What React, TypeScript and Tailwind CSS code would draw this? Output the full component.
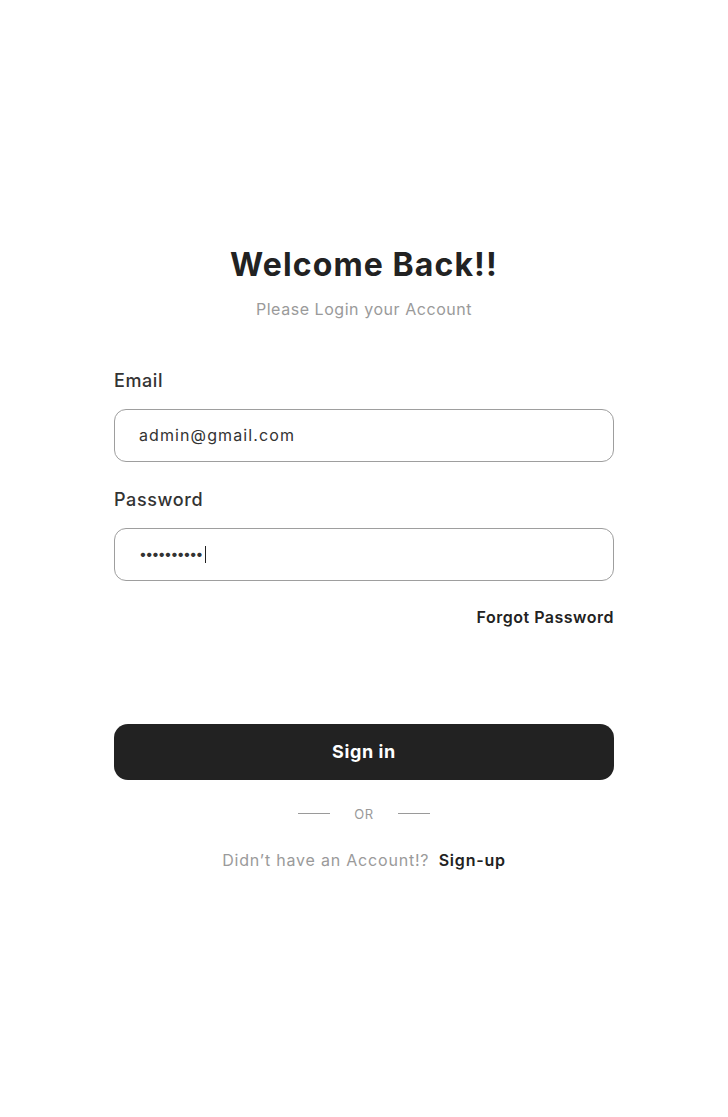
import { useState } from "react";

export default function App() {
  const [email, setEmail] = useState("admin@gmail.com");
  const [password, setPassword] = useState("••••••••••");

  return (
    <div className="min-h-screen bg-white font-['Inter',sans-serif] text-[#222]">
      <div className="mx-auto w-[500px] pt-[241px]">
        <h1 className="text-center text-[32px] font-bold leading-[48px] tracking-[1.1px] text-[#222]">
          Welcome Back!!
        </h1>
        <p className="mt-2 text-center text-base leading-6 tracking-[0.55px] text-[#9a9a9a]">
          Please Login your Account
        </p>

        <form className="mt-[46px]" onSubmit={(e) => e.preventDefault()}>
          <label className="block text-lg font-medium leading-[27px] tracking-[0.6px] text-[#333]">
            Email
          </label>
          <input
            value={email}
            onChange={(e) => setEmail(e.target.value)}
            className="mt-[14.5px] block h-[53px] w-full rounded-xl border border-[#9e9e9e] px-6 text-base tracking-[1.1px] text-[#333] outline-none"
          />

          <label className="mt-[24.5px] block text-lg font-medium leading-[27px] tracking-[0.6px] text-[#333]">
            Password
          </label>
          <div className="mt-[14.5px] flex h-[53px] w-full items-center rounded-xl border border-[#9e9e9e] px-6">
            <span className="text-sm tracking-[-1.6px] text-[#333]">{password}</span>
            <span className="ml-[3px] h-[17px] w-[1.5px] bg-[#222]" />
            <input
              value=""
              onChange={(e) => setPassword(password + e.target.value)}
              className="sr-only"
              type="password"
            />
          </div>

          <div className="mt-6 flex justify-end">
            <a href="#" className="text-base font-semibold leading-6 tracking-[0.5px] text-[#222]">
              Forgot Password
            </a>
          </div>

          <button
            type="submit"
            className="mt-[95px] block h-14 w-full rounded-[14px] bg-[#222] text-lg font-bold tracking-[0.6px] text-white"
          >
            Sign in
          </button>
        </form>

        <div className="mt-6 flex items-center justify-center gap-6">
          <span className="h-px w-8 bg-[#9a9a9a]" />
          <span className="w-5 text-center text-[13px] leading-5 tracking-[0.5px] text-[#9a9a9a]">OR</span>
          <span className="h-px w-8 bg-[#9a9a9a]" />
        </div>

        <p className="mt-6 text-center text-base leading-6 tracking-[0.8px] text-[#9a9a9a]">
          Didn’t have an Account!?{" "}
          <a href="#" className="ml-1 font-semibold text-[#222]">
            Sign-up
          </a>
        </p>
      </div>
    </div>
  );
}
